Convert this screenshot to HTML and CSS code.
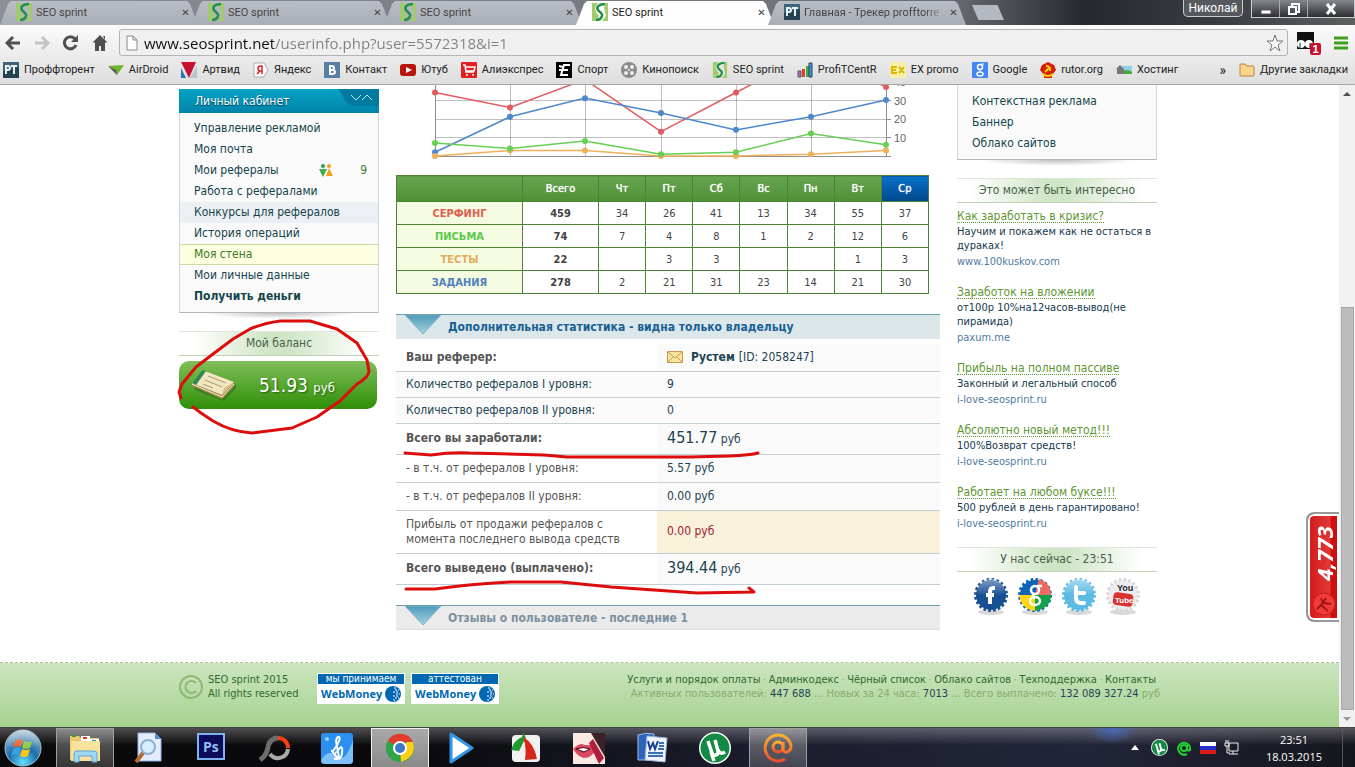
FILE: index.html
```html
<!DOCTYPE html>
<html lang="ru">
<head>
    <meta charset="UTF-8">
    <meta name="viewport" content="width=device-width, initial-scale=1.0">
    <title>SEO sprint</title>
    <link rel="stylesheet" href="styles.css">
</head>
<body>
    <!-- Shared icons -->
    <svg class="defs" aria-hidden="true">
        <defs>
            <linearGradient id="arrow-fill" x1="0" y1="0" x2="0" y2="1">
                <stop offset="0" stop-color="#4f9bb8"/>
                <stop offset="1" stop-color="#a4d3e2"/>
            </linearGradient>
            <linearGradient id="gloss" x1="0" y1="0" x2="0" y2="1">
                <stop offset="0" stop-color="#fff" stop-opacity=".45"/>
                <stop offset="1" stop-color="#fff" stop-opacity="0"/>
            </linearGradient>
            <radialGradient id="orb" cx=".5" cy=".9" r=".9">
                <stop offset="0" stop-color="#5fe0ff"/>
                <stop offset=".45" stop-color="#1c6ea8"/>
                <stop offset="1" stop-color="#9db9cc"/>
            </radialGradient>
            <linearGradient id="mail-fill" x1="0" y1="0" x2="0" y2="1">
                <stop offset="0" stop-color="#ffb22e"/>
                <stop offset="1" stop-color="#ee4f2e"/>
            </linearGradient>
            <symbol id="seo" viewBox="0 0 16 18">
                <path d="M0 0h6L3 5l1 4 3 4-3 5H0z" fill="#a2cc6c"/>
                <path d="M16 0h-3l-1 5 1 4 1 4-4 5h6z" fill="#a2cc6c"/>
                <path d="M13 1C7 1 4 4 6 7s5 3 4 6-3 4-6 4" fill="none" stroke="#1f8f4e" stroke-width="2.500"/>
            </symbol>
            <symbol id="pt" viewBox="0 0 16 16">
                <rect width="16" height="16" fill="#3f6579"/>
                <path d="M0 9l16-4v11H0z" fill="#234252"/>
                <path d="M3 12V4h2q2 0 2 2T5 8H3M8 4h6M11 4v8" fill="none" stroke="#e8f1f5" stroke-width="2"/>
            </symbol>
            <symbol id="down" viewBox="0 0 36 20">
                <path d="M0 0h36L18 19z" fill="url(#arrow-fill)" stroke="#7fb4c8" stroke-width="1"/>
            </symbol>
            <symbol id="gear" viewBox="0 0 36 42">
                <ellipse cx="18" cy="35" rx="13" ry="3" fill="#000" opacity=".15"/>
                <circle cx="18" cy="18" r="15"/>
                <circle cx="18" cy="18" r="15.500" fill="none" stroke="currentColor" stroke-width="3" stroke-dasharray="2.600 2.270"/>
            </symbol>
            <symbol id="utorrent" viewBox="0 0 32 32">
                <circle cx="16" cy="16" r="16" fill="#fff"/>
                <circle cx="16" cy="16" r="14.500" fill="#128a43"/>
                <path d="M9 9l4 12q1 3 4 2 3-1 2-4l-3-11M19 18q2 5 7 2M12 20l3 9" fill="none" stroke="#fff" stroke-width="3.500"/>
            </symbol>
            <symbol id="globe" viewBox="0 0 16 16">
                <circle cx="8" cy="8" r="8" fill="#0068b0"/>
                <path d="M9 2h2M10 4h4M8 6h6M11 8h4M8 10h6M10 12h4M8 14h3" stroke="#fff" stroke-width="1" stroke-dasharray="2 1"/>
            </symbol>
        </defs>
    </svg>

    <header class="browser">
        <div class="tab-strip">
            <div class="tabs">
                <button class="tab"><svg class="favicon"><use href="#seo"/></svg><span>SEO sprint</span><i class="close">✕</i></button>
                <button class="tab"><svg class="favicon"><use href="#seo"/></svg><span>SEO sprint</span><i class="close">✕</i></button>
                <button class="tab"><svg class="favicon"><use href="#seo"/></svg><span>SEO sprint</span><i class="close">✕</i></button>
                <button class="tab tab-active"><svg class="favicon"><use href="#seo"/></svg><span>SEO sprint</span><i class="close">✕</i></button>
                <button class="tab"><svg class="favicon"><use href="#pt"/></svg><span class="fade">Главная - Трекер profftorre</span><i class="close">✕</i></button>
                <button class="new-tab" aria-label="Новая вкладка"></button>
            </div>
            <div class="window-controls">
                <button class="profile">Николай</button>
                <div class="win-btns">
                    <button aria-label="Свернуть"><svg width="12" height="12"><rect x="1" y="7" width="10" height="4" fill="#fff" stroke="#555"/></svg></button>
                    <button aria-label="Восстановить"><svg width="12" height="12"><path d="M4 3V1h7v8H9M1 4h7v7H1z" fill="none" stroke="#fff" stroke-width="2"/></svg></button>
                    <button class="win-close" aria-label="Закрыть"><svg width="12" height="12"><path d="M2 1l8 10M10 1L2 11" stroke="#fff" stroke-width="3"/></svg></button>
                </div>
            </div>
        </div>

        <div class="toolbar">
            <button class="nav-btn" aria-label="Назад"><svg width="16" height="14"><path d="M15 7H3M8 1L2 7l6 6" fill="none" stroke="#505050" stroke-width="3"/></svg></button>
            <button class="nav-btn" aria-label="Вперёд"><svg width="16" height="14"><path d="M1 7h12M8 1l6 6-6 6" fill="none" stroke="#c4c4c4" stroke-width="3"/></svg></button>
            <button class="nav-btn" aria-label="Обновить"><svg width="16" height="16"><path d="M13 10a6 6 0 1 1-1-6" fill="none" stroke="#505050" stroke-width="3"/><path d="M15 0v7H8z" fill="#505050"/></svg></button>
            <button class="nav-btn" aria-label="Домой"><svg width="16" height="16"><path d="M8 0l7 7-1 1-1-1v9H9v-5H7v5H3V7L2 8 1 7zM11 1h2v4z" fill="#505050"/></svg></button>
            <div class="omnibox">
                <svg width="12" height="16"><path d="M1 1h6l4 4v10H1zM7 1v4h4" fill="#fff" stroke="#888"/></svg>
                <input class="url" type="text" aria-label="Адрес" value="www.seosprint.net/userinfo.php?user=5572318&amp;i=1">
                <svg width="18" height="18"><path d="M9 1l2 6h6l-5 4 2 6-5-4-5 4 2-6-5-4h6z" fill="#fff" stroke="#777"/></svg>
            </div>
            <button class="ext" aria-label="Расширение">
                <svg width="24" height="24"><path d="M0 1h17v17H0z" fill="#111"/><circle cx="4" cy="13" r="4" fill="#fff"/><circle cx="12" cy="13" r="4" fill="#fff"/><path d="M3 12v6M13 12v6" stroke="#222"/></svg>
                <span class="ext-count">1</span>
            </button>
            <button class="menu-btn" aria-label="Меню"><svg width="14" height="14"><path d="M0 2h14M0 7h14M0 12h14" stroke="#3f9f1e" stroke-width="3"/></svg></button>
        </div>

        <nav class="bookmarks">
            <a href="#"><svg><use href="#pt"/></svg>Проффторент</a>
            <a href="#"><svg viewBox="0 0 16 16"><path d="M0 4l16-1-7 10-3-6z" fill="#6fb52c"/><path d="M0 4l9 9-1-5z" fill="#555"/></svg>AirDroid</a>
            <a href="#"><svg viewBox="0 0 16 16"><path d="M0 6l5 10H0z" fill="#2c72b8"/><path d="M16 4v12H9z" fill="#b9c3cc"/><path d="M0 0h15L8 16z" fill="#c4122f"/></svg>Артвид</a>
            <a href="#"><svg viewBox="0 0 16 16"><path d="M1 1h10l4 7-4 7H1z" fill="#fff" stroke="#aaa"/><path d="M9 12V4H7q-2 0-2 2.500T7 9h2M7 9l-3 3" fill="none" stroke="#e02020" stroke-width="1.500"/></svg>Яндекс</a>
            <a href="#"><svg viewBox="0 0 16 16"><rect width="16" height="16" fill="#587ea3"/><path d="M6 4v8h2q3 0 3-2T8 8H6h2q2 0 2-2T8 4z" fill="none" stroke="#fff" stroke-width="2"/></svg>Контакт</a>
            <a href="#"><svg viewBox="0 0 16 16"><rect y="2" width="16" height="12" rx="3" fill="#b8150f"/><path d="M6 5l6 3-6 3z" fill="#fff"/></svg>Ютуб</a>
            <a href="#"><svg viewBox="0 0 16 16"><rect width="16" height="16" rx="1" fill="#e02121"/><path d="M2 3h2l1 7h8M5 5h9l-1 4H5" fill="none" stroke="#fff" stroke-width="1.500"/><circle cx="6" cy="13" r="1" fill="#fff"/><circle cx="12" cy="13" r="1" fill="#fff"/></svg>Алиэкспрес</a>
            <a href="#"><svg viewBox="0 0 16 16"><rect width="16" height="16" fill="#000"/><path d="M14 3H8L5 13h7M3 8h9M3 4l4 1" fill="none" stroke="#fff" stroke-width="2"/></svg>Спорт</a>
            <a href="#"><svg viewBox="0 0 16 16"><circle cx="8" cy="8" r="8" fill="#8b8b8b"/><g fill="#eee"><circle cx="5" cy="5" r="2"/><circle cx="11" cy="5" r="2"/><circle cx="5" cy="11" r="2"/><circle cx="11" cy="11" r="2"/><circle cx="8" cy="8" r="1"/></g></svg>Кинопоиск</a>
            <a href="#"><svg><use href="#seo"/></svg>SEO sprint</a>
            <a href="#"><svg viewBox="0 0 16 16"><path d="M1 9h3v6H1z" fill="#b06fc0" stroke="#555"/><path d="M5 7h3v8H5z" fill="#e04030"/><path d="M9 4h3v11H9z" fill="#3faf3f"/><path d="M12 1h3v14h-3z" fill="#4a90d9" stroke="#246"/></svg>ProfiTCentR</a>
            <a href="#"><svg viewBox="0 0 16 16"><rect width="16" height="16" fill="#f6efa8"/><path d="M7 5H2v6h5M2 8h4M9 5l5 6M14 5l-5 6" fill="none" stroke="#d8b800" stroke-width="2"/></svg>EX promo</a>
            <a href="#"><svg viewBox="0 0 16 16"><rect width="16" height="16" rx="1" fill="#4285f4"/><circle cx="8" cy="5" r="2.500" fill="none" stroke="#fff" stroke-width="1.500"/><path d="M9 2h3M8 8q-1 1 1 2" stroke="#fff" fill="none"/><ellipse cx="8" cy="12" rx="3" ry="2" fill="none" stroke="#fff" stroke-width="1.500"/></svg>Google</a>
            <a href="#"><svg viewBox="0 0 16 16"><path d="M8 0l6 3 2 5-4 5v3H4v-3L0 8l2-5z" fill="#d81e05"/><path d="M3 12q5 4 10 0M6 4q5 0 4 5M5 10l5-5" fill="none" stroke="#ffd200" stroke-width="2"/></svg>rutor.org</a>
            <a href="#"><svg viewBox="0 0 16 16"><path d="M5 4h11v8H5z" fill="#8fd0ec"/><path d="M5 10q6-4 11 0v2H5z" fill="#4aa83a"/><path d="M0 7l4-4 4 4v5H1V7z" fill="#777"/></svg>Хостинг</a>
            <button class="more">»</button>
            <a class="other" href="#"><svg viewBox="0 0 16 16"><path d="M1 3q0-1 1-1h4l2 2h6q1 0 1 1v8q0 1-1 1H2q-1 0-1-1z" fill="#fbd58e" stroke="#b98637"/></svg>Другие закладки</a>
        </nav>
    </header>

    <div class="viewport">
        <div class="page">
            <main class="wrap">
                <aside class="col">
                    <section class="menu-box">
                        <h2 class="menu-title">Личный кабинет<svg width="42" height="17"><path d="M0 0h42v17H20Q10 17 6 8T0 0z" fill="#007a9e"/><path d="M14 6l5 5 5-5M25 11l5-5 5 5" fill="none" stroke="#b8edf7" stroke-width="1"/></svg></h2>
                        <ul class="menu">
                            <li><a href="#">Управление рекламой</a></li>
                            <li><a href="#">Моя почта</a></li>
                            <li><a href="#">Мои рефералы</a><span class="refs"><svg width="14" height="14"><circle cx="4" cy="2" r="2" fill="#2f9a4e"/><path d="M0 5h8l-4 8z" fill="#3fae50"/><circle cx="10" cy="2" r="2" fill="#f0a020"/><path d="M10 4l4 8H7z" fill="#f5a01e"/></svg>9</span></li>
                            <li><a href="#">Работа с рефералами</a></li>
                            <li class="hover"><a href="#">Конкурсы для рефералов</a></li>
                            <li><a href="#">История операций</a></li>
                            <li class="current"><a href="#">Моя стена</a></li>
                            <li><a href="#">Мои личные данные</a></li>
                            <li><a class="strong" href="#">Получить деньги</a></li>
                        </ul>
                    </section>
                    <h3 class="side-title">Мой баланс</h3>
                    <a class="balance" href="#">
                        <svg width="48" height="32" viewBox="0 0 48 32"><path d="M4 17l29 13 13-15v4L34 32 5 21z" fill="#2b5d14" opacity=".5"/><path d="M2 14l30 12 12-13v4L32 30 2 17z" fill="#a8844e"/><path d="M2 14L12 1l32 12-12 13z" fill="#f3e6c0"/><path d="M2 14L12 1l4 1L6 16z" fill="#2b8a4c"/><path d="M18 7l18 7M15 11l17 7M13 15l10 4" stroke="#a99a6a"/><path d="M32 26l2-7 10-6z" fill="#d9bf86"/><path d="M2 15l30 13 12-13" fill="none" stroke="#f8f0d8"/></svg>
                        <span class="sum">51.93 <small>руб</small></span>
                    </a>
                </aside>

                <section class="content">
                    <svg class="chart" viewBox="0 0 544 78" width="544" height="78">
                        <path d="M39 15.500h456M39 34.500h456M39 52.500h456M114.500 0v71M189.500 0v71M265.500 0v71M340.500 0v71M415.500 0v71" stroke="#000" stroke-opacity=".25"/>
                        <path d="M39.500 0v71M490.500 0v71M39 71.500h456M490 15.500h5M490 34.500h5M490 52.500h5" stroke="#8d8d8d"/>
                        <g class="chart-labels"><text x="498" y="1">40</text><text x="498" y="20">30</text><text x="498" y="38">20</text><text x="498" y="57">10</text></g>
                        <g id="series"></g>
                    </svg>

                    <table class="week">
                        <colgroup><col class="w-name"><col class="w-total"><col span="7"></colgroup>
                        <thead>
                            <tr><th></th><th>Всего</th><th>Чт</th><th>Пт</th><th>Сб</th><th>Вс</th><th>Пн</th><th>Вт</th><th class="today">Ср</th></tr>
                        </thead>
                        <tbody>
                            <tr><th class="red">СЕРФИНГ</th><td>459</td><td>34</td><td>26</td><td>41</td><td>13</td><td>34</td><td>55</td><td>37</td></tr>
                            <tr><th class="green">ПИСЬМА</th><td>74</td><td>7</td><td>4</td><td>8</td><td>1</td><td>2</td><td>12</td><td>6</td></tr>
                            <tr><th class="orange">ТЕСТЫ</th><td>22</td><td></td><td>3</td><td>3</td><td></td><td></td><td>1</td><td>3</td></tr>
                            <tr><th class="blue">ЗАДАНИЯ</th><td>278</td><td>2</td><td>21</td><td>31</td><td>23</td><td>14</td><td>21</td><td>30</td></tr>
                        </tbody>
                    </table>

                    <h2 class="bar"><svg width="36" height="20"><use href="#down"/></svg>Дополнительная статистика - видна только владельцу</h2>
                    <table class="stats">
                        <tr class="main first"><th>Ваш реферер:</th><td><span class="referer"><svg width="16" height="12"><path d="M.5.5h15v11H.5z" fill="#f9e3a2" stroke="#c79a45"/><path d="M1 1l7 6 7-6M1 11l5-5M15 11l-5-5" fill="none" stroke="#c79a45"/></svg><b>Рустем</b> [ID: 2058247]</span></td></tr>
                        <tr class="shade"><th>Количество рефералов I уровня:</th><td>9</td></tr>
                        <tr class="shade"><th>Количество рефералов II уровня:</th><td>0</td></tr>
                        <tr class="main total"><th>Всего вы заработали:</th><td><span class="big">451.77</span> руб</td></tr>
                        <tr class="sub"><th>- в т.ч. от рефералов I уровня:</th><td>5.57 руб</td></tr>
                        <tr class="sub"><th>- в т.ч. от рефералов II уровня:</th><td>0.00 руб</td></tr>
                        <tr class="profit"><th>Прибыль от продажи рефералов с момента последнего вывода средств</th><td>0.00 руб</td></tr>
                        <tr class="main total"><th>Всего выведено (выплачено):</th><td><span class="big">394.44</span> руб</td></tr>
                    </table>
                    <h2 class="bar bar-gray"><svg width="36" height="20"><use href="#down"/></svg>Отзывы о пользователе - последние 1</h2>
                </section>

                <aside class="col">
                    <section class="menu-box menu-cut">
                        <ul class="menu">
                            <li><a href="#">Ссылка в каталоге</a></li>
                            <li><a href="#">Контекстная реклама</a></li>
                            <li><a href="#">Баннер</a></li>
                            <li><a href="#">Облако сайтов</a></li>
                        </ul>
                    </section>
                    <h3 class="side-title">Это может быть интересно</h3>
                    <div class="ads">
                        <div class="ad"><a href="#">Как заработать в кризис?</a><p>Научим и покажем как не остаться в дураках!</p><span>www.100kuskov.com</span></div>
                        <div class="ad"><a href="#">Заработок на вложении</a><p>от100р 10%на12часов-вывод(не пирамида)</p><span>paxum.me</span></div>
                        <div class="ad"><a href="#">Прибыль на полном пассиве</a><p>Законный и легальный способ</p><span>i-love-seosprint.ru</span></div>
                        <div class="ad"><a href="#">Абсолютно новый метод!!!</a><p>100%Возврат средств!</p><span>i-love-seosprint.ru</span></div>
                        <div class="ad"><a href="#">Работает на любом буксе!!!</a><p>500 рублей в день гарантировано!</p><span>i-love-seosprint.ru</span></div>
                    </div>
                    <h3 class="side-title clock-title">У нас сейчас - 23:51</h3>
                    <div class="social">
                        <a href="#" aria-label="Facebook"><svg viewBox="0 0 36 42"><use href="#gear" fill="#174f93" color="#174f93"/><path d="M22 11h-2q-3 0-3 4v12M13 18h8" fill="none" stroke="#fff" stroke-width="4"/><path d="M4 16a14 14 0 0 1 28 0q-14 6-28 0" fill="url(#gloss)"/></svg></a>
                        <a href="#" aria-label="Google"><svg viewBox="0 0 36 42"><use href="#gear" fill="#0d64b4" color="#0d64b4"/><path d="M18 18L22 2q12 4 12 16z" fill="#ee6b63"/><path d="M18 18h16q0 13-16 16z" fill="#13a24b"/><path d="M18 18v16Q4 32 2 18z" fill="#ffd516"/><g fill="none" stroke="#fff" stroke-width="2.500"><circle cx="18" cy="13" r="4"/><path d="M20 9h5M17 17q-3 3 1 4"/><ellipse cx="18" cy="24" rx="5" ry="4"/></g></svg></a>
                        <a href="#" aria-label="Twitter"><svg viewBox="0 0 36 42"><use href="#gear" fill="#5bbbe2" color="#5bbbe2"/><path d="M15 10v11q0 5 5 5h3M15 16h8" fill="none" stroke="#fff" stroke-width="4" stroke-linecap="round"/><path d="M4 16a14 14 0 0 1 28 0q-14 6-28 0" fill="url(#gloss)"/></svg></a>
                        <a href="#" aria-label="YouTube"><svg viewBox="0 0 36 42"><use href="#gear" fill="#ececf0" color="#d6d6dc"/><rect x="8" y="16" width="20" height="13" rx="4" fill="#d9322f" transform="rotate(8 18 23)"/><text class="yt-you" x="12" y="14">You</text><text class="yt-tube" x="10" y="26">Tube</text></svg></a>
                    </div>
                </aside>

                <!-- Red marker strokes -->
                <svg class="marks" viewBox="179 85 981 577" width="981" height="577" aria-hidden="true">
                    <path d="M181 398l-2-6 3-8 14-17 17-13 20-15 17-10q14-6 30-8h30l27 8 20 14 10 17 2 11q0 6-12 13l-17 17-23 16-25 11-40 5q-20-1-39-12l-12-8-8-6"/>
                    <path d="M405 453l26 2q20-3 39-2l74 2 23 2h123l39-1q22-1 29-3"/>
                    <path d="M406 589h29q36-5 76-7h50l50 5 86 6 57-1-5-4"/>
                </svg>
            </main>

            <a class="counter" href="#"><svg width="24" height="24" viewBox="0 0 24 24"><circle cx="12" cy="12" r="11" fill="#f13b3b" stroke="#c91c1c"/><path d="M5 17l6-6 3-5M11 11l8 1M9 13l7 6M11 11l-2-5" fill="none" stroke="#a31515" stroke-width="2"/></svg><b>4,773</b></a>

            <footer class="footer">
                <div class="footer-in">
                    <div class="copy"><svg width="24" height="24"><circle cx="12" cy="12" r="11" fill="none" stroke="#8cba72" stroke-width="2"/><path d="M17 8a6 6 0 1 0 0 8" fill="none" stroke="#8cba72" stroke-width="2"/></svg><p>SEO sprint 2015<br>All rights reserved</p></div>
                    <a class="wm" href="#"><span>мы принимаем</span><b>WebMoney<svg width="16" height="16"><use href="#globe"/></svg></b></a>
                    <a class="wm" href="#"><span>аттестован</span><b>WebMoney<svg width="16" height="16"><use href="#globe"/></svg></b></a>
                    <div class="footer-right">
                        <nav class="footer-links"><a href="#">Услуги и порядок оплаты</a><i>·</i><a href="#">Админкодекс</a><i>·</i><a href="#">Чёрный список</a><i>·</i><a href="#">Облако сайтов</a><i>·</i><a href="#">Техподдержка</a><i>·</i><a href="#">Контакты</a></nav>
                        <p>Активных пользователей: <em>447 688</em> ... Новых за 24 часа: <em>7013</em> ... Всего выплачено: <em>132 089 327.24</em> руб</p>
                    </div>
                </div>
            </footer>
        </div>
        <div class="scrollbar" aria-hidden="true"><i class="up"></i><div class="thumb"></div><i class="dn"></i></div>
    </div>

    <div class="taskbar">
        <button class="start" aria-label="Пуск"><svg width="38" height="38" viewBox="0 0 38 38"><circle cx="19" cy="19" r="18" fill="url(#orb)" stroke="#9fc4d8"/><path d="M11 12q4-3 8-1l-2 7q-4-2-8 1z" fill="#ee5a24"/><path d="M20 12q4 2 8 0l-2 7q-4 2-8 0z" fill="#8cc63f"/><path d="M9 20q4-3 8-1l-2 7q-4-2-8 1z" fill="#39a0e8"/><path d="M18 20q4 2 8 0l-2 7q-4 2-8 0z" fill="#fcc419"/><path d="M3 17a16 16 0 0 1 32 0q-16 5-32 0" fill="url(#gloss)"/></svg></button>
        <button class="task open" aria-label="Проводник"><svg viewBox="0 0 32 32"><path d="M1 4h9l2 2h18v22H1z" fill="#e9c76c"/><path d="M12 4h9v5h-9zM21 7h9v4h-9z" fill="#fff"/><path d="M3 3h4v2H3z" fill="#2aa52a"/><path d="M14 5h4v2h-4z" fill="#d33"/><path d="M23 8h4v2h-4z" fill="#28c"/><path d="M2 9h29v20H2z" fill="#f8e39c"/><path d="M5 30v-8q0-3 3-3h17q3 0 3 3v8h-5v-6H10v6z" fill="#9fd6f2" stroke="#5aa6d0"/></svg></button>
        <button class="task" aria-label="Поиск"><svg viewBox="0 0 32 32"><path d="M6 1h17l6 6v22H6z" fill="#e4edfb" stroke="#8fb2e4"/><path d="M23 1v6h6z" fill="#5a86cc"/><circle cx="16" cy="15" r="7" fill="#d5efff" stroke="#8db0cc" stroke-width="2"/><path d="M11 21l-7 9" stroke="#b56a34" stroke-width="4"/></svg></button>
        <button class="task" aria-label="Photoshop"><svg viewBox="0 0 32 32"><rect x="3" y="2" width="26" height="25" fill="#0c0c5a" stroke="#7fb4ee" stroke-width="2"/><text class="ps" x="8" y="20">Ps</text></svg></button>
        <button class="task" aria-label="Диск"><svg viewBox="0 0 32 32"><path d="M20 6a10 10 0 0 0-10 9q-1 8-8 13" fill="none" stroke="#6d6d6d" stroke-width="5"/><path d="M20 6a10 10 0 0 1 10 10" fill="none" stroke="#ff3d14" stroke-width="4"/><path d="M30 17a10 10 0 0 1-18 5" fill="none" stroke="#aaa" stroke-width="4"/></svg></button>
        <button class="task" aria-label="Музыка"><svg viewBox="0 0 32 32"><rect y="1" width="32" height="31" rx="3" fill="#2a8ff0"/><circle cx="6" cy="7" r="2" fill="#9fd2ff"/><path d="M0 28q8-12 16-4t16-16v20q0 4-4 4H4q-4 0-4-4z" fill="#7cc0fa"/><path d="M13 26q3 3 5-1L15 9q1-5 3-4t-2 8-5 6 4 5 6-3-3-4-3 3" fill="none" stroke="#fff" stroke-width="2"/></svg></button>
        <button class="task open bright" aria-label="Chrome"><svg viewBox="0 0 32 32"><circle cx="16" cy="16" r="14" fill="#2fa44a"/><path d="M16 16L4 9a14 14 0 0 1 25 1H16z" fill="#e23c2f"/><path d="M16 16l7-6h6q4 15-12 20z" fill="#fcd016"/><circle cx="16" cy="16" r="7" fill="#fff"/><circle cx="16" cy="16" r="5" fill="#3c79c8"/></svg></button>
        <button class="task" aria-label="Плеер"><svg viewBox="0 0 32 32"><path d="M4 2l21 14L4 30z" fill="#fff" stroke="#2f94ea" stroke-width="3" stroke-linejoin="round"/></svg></button>
        <button class="task" aria-label="Capture"><svg viewBox="0 0 32 32"><rect x="2" y="3" width="28" height="27" rx="4" fill="#f1f1f1"/><path d="M13 0l3 6-2 3-5 10-8-1Q4 8 12 5z" fill="#1f9a2e"/><path d="M13 5q11 6 14 22l-12 1q2-12-2-23z" fill="#d9261c"/></svg></button>
        <button class="task" aria-label="Макияж"><svg viewBox="0 0 32 32"><rect width="32" height="32" y="1" fill="#fbe9e4"/><path d="M18 1h14v24z" fill="#3a2226"/><path d="M0 17q5-5 9-5l3 1 7 0 4 4q-4 9-12 9-6-1-11-9z" fill="#d84a62"/><path d="M3 17q7-3 14 0l-6 3z" fill="#fff" stroke="#501"/><path d="M16 11l4-4 11 19-5 6z" fill="#b01f3a"/></svg></button>
        <button class="task" aria-label="Word"><svg viewBox="0 0 32 32"><path d="M2 3q8-3 16-1v26H2z" fill="#2f63b8" stroke="#9fc0ee"/><path d="M11 4l20 2-2 24-20-2z" fill="#eef5ff" stroke="#9ab6de"/><path d="M12 9l2 8 3-6 2 6 3-8" fill="none" stroke="#1d3f8f" stroke-width="2"/><path d="M23 11h5M23 14h5M22 17h6M12 21h15M12 24h15" stroke="#3a6dc0" stroke-width="2"/></svg></button>
        <button class="task" aria-label="uTorrent"><svg><use href="#utorrent"/></svg></button>
        <button class="task open" aria-label="Mail.Ru"><svg viewBox="0 0 32 32"><g fill="none" stroke="url(#mail-fill)" stroke-width="3"><circle cx="16" cy="15" r="5"/><path d="M21 10v7q1 4 4 3 4-1 4-6a13 13 0 1 0-6 13"/></g></svg></button>

        <div class="tray">
            <svg width="8" height="5"><path d="M0 5l4-5 4 5z" fill="#fff"/></svg>
            <svg width="17" height="17"><use href="#utorrent"/></svg>
            <svg width="16" height="16"><g fill="none" stroke="#1fd32a" stroke-width="2"><circle cx="8" cy="8" r="3"/><path d="M11 5v4q1 2 3 1a6 6 0 1 0-3 4"/></g></svg>
            <svg width="16" height="12"><path d="M0 0h16v4H0z" fill="#fff"/><path d="M0 4h16v4H0z" fill="#2030c8"/><path d="M0 8h16v4H0z" fill="#e01818"/></svg>
            <svg width="16" height="16"><path d="M5 3h9v8H5zM9 11v3M5 14h9M2 0v3M4 0v3M1 3h4v3H1zM3 6v7h3" fill="none" stroke="#eee"/></svg>
            <time>23:51<br>18.03.2015</time>
            <span class="desktop"></span>
        </div>
    </div>

    <script>
        const series = [
            { color: "#e35b62", data: [34, 26, 41, 13, 34, 55, 37] },
            { color: "#4d88cc", data: [2, 21, 31, 23, 14, 21, 30] },
            { color: "#f0b05a", data: [0, 3, 3, 0, 0, 1, 3] },
            { color: "#66cf54", data: [7, 4, 8, 1, 2, 12, 6] }
        ];
        const days = [39, 114, 189, 265, 340, 415, 490];
        const chart = document.getElementById("series");

        chart.innerHTML = series.map(s => {
            const points = s.data.map((v, i) => [days[i], 71 - v * 56 / 30]);
            const dots = points.map(p => `<circle cx="${p[0]}" cy="${p[1]}" r="3" fill="${s.color}"/>`).join("");
            return `<polyline points="${points.join(" ")}" fill="none" stroke="${s.color}" stroke-width="1.5"/>${dots}`;
        }).join("");
    </script>
</body>
</html>
```
FILE: styles.css
```css
* {
    margin: 0;
    padding: 0;
    box-sizing: border-box;
}

body {
    display: flex;
    flex-direction: column;
    height: 100vh;
    overflow: hidden;
    font-family: "DejaVu Sans Condensed", "Noto Sans", sans-serif;
    font-size: 12px;
    color: #1d4454;
    background: #fff;
}

button {
    border: none;
    background: none;
    font: inherit;
    color: inherit;
}

a {
    color: inherit;
    text-decoration: none;
}

ul {
    list-style: none;
}

svg {
    flex: none;
    display: block;
}

.defs {
    position: absolute;
    width: 0;
    height: 0;
}

/* Browser window */
.browser {
    flex: none;
    font-family: Roboto, "Open Sans", sans-serif;
    font-size: 11px;
    color: #222;
    border-bottom: 1px solid #a6a6a6;
    background: linear-gradient(#fbfbfb 25px, #dedede);
}

.tab-strip {
    display: flex;
    justify-content: space-between;
    height: 25px;
    background: linear-gradient(to right, #8d8f96, #6b6d74 70%, #26282d 80%, #3a3d42 90%, #5c605f);
}

.tabs {
    display: flex;
    padding-top: 1px;
}

.tab {
    display: flex;
    align-items: center;
    gap: 4px;
    width: 198px;
    height: 24px;
    margin-right: -6px;
    padding: 0 8px 2px 16px;
    color: #444;
    background: linear-gradient(#b9bdc6, #a9adb6);
    clip-path: polygon(0 100%, 8px 3px, 11px 0, calc(100% - 11px) 0, calc(100% - 8px) 3px, 100% 100%);
}

.tab span {
    flex: 1;
    text-align: left;
    white-space: nowrap;
    overflow: hidden;
}

.tab .fade {
    mask-image: linear-gradient(to right, #000 85%, transparent);
}

.tab-active {
    color: #222;
    background: #fdfdfd;
}

.favicon {
    width: 16px;
    height: 18px;
}

.close {
    width: 9px;
    font: bold 10px "DejaVu Sans", sans-serif;
    color: #444;
}

.new-tab {
    width: 32px;
    height: 15px;
    margin: 4px 0 0 12px;
    background: #b4b8c1;
    clip-path: polygon(0 0, 80% 0, 100% 100%, 20% 100%);
}

.window-controls {
    display: flex;
    align-items: flex-start;
    gap: 8px;
}

.profile {
    width: 60px;
    height: 17px;
    line-height: 15px;
    font-size: 12px;
    color: #fff;
    border: 1px solid #ccc;
    border-top: none;
    border-radius: 0 0 5px 5px;
    background: #55595e;
}

.win-btns {
    display: flex;
    height: 18px;
    border: 1px solid #ccc;
    border-top: none;
    background: linear-gradient(#85888a, #2c2e31);
}

.win-btns button {
    display: flex;
    justify-content: center;
    align-items: center;
    width: 28px;
    border-right: 1px solid #aaa;
}

.win-btns .win-close {
    width: 46px;
    border-right: none;
}

.toolbar {
    display: flex;
    align-items: center;
    height: 33px;
    padding: 2px 7px 0 5px;
}

.nav-btn {
    width: 16px;
    margin-right: 13px;
}

.omnibox {
    flex: 1;
    display: flex;
    align-items: center;
    gap: 6px;
    height: 27px;
    margin-left: -2px;
    margin-right: 9px;
    padding: 0 3px 0 6px;
    border: 1px solid #b4b4b4;
    border-radius: 3px;
    background: #f0f0f0;
}

.url {
    flex: 1;
    border: none;
    outline: none;
    font-family: "Open Sans", "Noto Sans", sans-serif;
    font-size: 15px;
    color: transparent;
    background: linear-gradient(to right, #111 130px, #808080 130px);
    -webkit-background-clip: text;
    background-clip: text;
}

.ext {
    position: relative;
    margin-right: 13px;
}

.ext-count {
    position: absolute;
    right: 0;
    bottom: 0;
    width: 11px;
    border-radius: 2px;
    font: bold 11px/12px "Liberation Sans", sans-serif;
    color: #fff;
    background: #c4122f;
}

.bookmarks {
    display: flex;
    align-items: center;
    gap: 13px;
    height: 26px;
    padding: 0 7px 3px 3px;
    white-space: nowrap;
}

.bookmarks a {
    display: flex;
    align-items: center;
    gap: 5px;
}

.bookmarks svg {
    width: 16px;
    height: 16px;
}

.more {
    margin-left: auto;
    font-size: 14px;
}

/* Page */
.viewport {
    flex: 1;
    display: flex;
    min-height: 0;
}

.page {
    position: relative;
    flex: 1;
    display: flex;
    flex-direction: column;
    overflow: hidden;
}

.wrap {
    position: relative;
    flex: 1;
    display: grid;
    grid-template-columns: 200px 1fr 200px;
    gap: 17px;
    width: 981px;
    min-height: 0;
    margin: 0 auto;
    padding-right: 3px;
}

.marks {
    position: absolute;
    top: 0;
    left: 0;
    overflow: visible;
    fill: none;
    stroke: #de0d0d;
    stroke-width: 3;
    stroke-linecap: round;
    stroke-linejoin: round;
    pointer-events: none;
}

.menu-box {
    position: relative;
    margin-top: 4px;
    margin-bottom: 18px;
}

.menu-box::after {
    content: "";
    display: block;
    position: absolute;
    left: 20px;
    right: 20px;
    top: 100%;
    height: 6px;
    background: radial-gradient(ellipse at top, rgba(0, 0, 0, 0.25), transparent 70%);
}

.menu-title {
    display: flex;
    justify-content: space-between;
    height: 24px;
    padding-left: 16px;
    line-height: 24px;
    font-size: 12px;
    font-weight: normal;
    color: #fff;
    text-shadow: 0 1px 1px #035;
    background: linear-gradient(#06a3c4, #0083a8);
}

.menu {
    padding: 5px 0;
    border: 1px solid #d4d6d8;
    border-top: none;
    border-bottom-color: #b4b6b8;
    background: #fafafa;
}

.menu li {
    display: flex;
    justify-content: space-between;
    height: 21px;
    padding: 0 11px 0 14px;
    line-height: 21px;
    color: #14444c;
}

.menu .hover {
    background: #eceff4;
}

.menu .current {
    line-height: 19px;
    color: #3a7a28;
    border: solid #ccd9a0;
    border-width: 1px 0;
    background: #fdffe0;
}

.menu .strong {
    font-weight: bold;
}

.refs {
    display: flex;
    align-items: center;
    gap: 27px;
    color: #3a7a28;
}

.menu-cut {
    margin-top: -20px;
}

.side-title {
    height: 25px;
    line-height: 23px;
    font-size: 12px;
    font-weight: normal;
    text-align: center;
    color: #47614a;
    border-top: 1px solid #dde5d8;
    border-bottom: 1px solid #c3d0b8;
    background: linear-gradient(to right, #fff 7%, #cfe5c6 45%, #cfe5c6 55%, #fff 93%);
}

.balance {
    display: flex;
    align-items: center;
    gap: 21px;
    width: 198px;
    height: 48px;
    margin-top: 5px;
    padding-left: 11px;
    border-radius: 10px;
    color: #fff;
    text-shadow: 1px 1px 2px #2b5d14;
    background: linear-gradient(#7fbf58, #2f8f08);
}

.sum {
    font-size: 19px;
}

.sum small {
    font-size: 13px;
}

.chart-labels {
    font: 11px "Liberation Sans", sans-serif;
    fill: #666;
}

.week {
    width: 533px;
    margin-top: 12px;
    table-layout: fixed;
    border-collapse: collapse;
    font-size: 11px;
    text-align: center;
    color: #444;
}

.w-name {
    width: 126px;
}

.w-total {
    width: 76px;
}

.week th,
.week td {
    height: 23px;
    border: 1px solid #4a8434;
}

.week thead th {
    height: 26px;
    font-weight: normal;
    color: #fff;
    text-shadow: 0 0 1px #fff;
    background: linear-gradient(#67a551, #4f9034);
}

.week thead .today {
    background: linear-gradient(#0a72c8, #00478a);
}

.week tbody th {
    background: #f4fbe0;
}

.week td:nth-child(2) {
    font-weight: bold;
}

.red { color: #e06050; }
.green { color: #5cc94c; }
.orange { color: #e3ab5c; }
.blue { color: #4f80bd; }

.bar {
    display: flex;
    gap: 7px;
    height: 25px;
    margin-top: 20px;
    padding-left: 9px;
    line-height: 24px;
    font-size: 12px;
    color: #176095;
    border-top: 1px solid #6fa0ae;
    background: #dce7ea;
}

.bar-gray {
    color: #7d919e;
    background: #ebebeb;
    border-bottom: 1px solid #ddd;
}

.stats {
    width: 100%;
    margin-top: 5px;
    border-collapse: collapse;
    table-layout: fixed;
}

.stats th,
.stats td {
    height: 26px;
    padding: 0 10px;
    text-align: left;
    font-weight: normal;
    line-height: 15px;
    border-bottom: 1px solid #c3cfd5;
}

.stats th {
    width: 261px;
}

.stats td,
.stats .shade th {
    background: #fafafa;
}

.stats .first th,
.stats .first td {
    height: 27px;
}

.stats .main th {
    font-weight: bold;
    color: #555;
}

.stats .total th,
.stats .total td {
    height: 31px;
}

.stats .sub th,
.stats .sub td {
    height: 28px;
}

.stats .sub th,
.stats .profit th {
    color: #555;
}

.stats .profit th,
.stats .profit td {
    height: 43px;
}

.stats .profit td {
    color: #9c1b33;
    background: #faf1da;
}

.referer {
    display: flex;
    align-items: center;
    gap: 4px;
}

.referer b {
    margin-left: 4px;
}

.big {
    font-size: 16px;
}

.ads {
    padding-top: 4px;
}

.ad {
    margin-bottom: 12px;
    font-size: 11px;
}

.ad a {
    display: block;
    width: fit-content;
    height: 16px;
    margin-bottom: 2px;
    line-height: 18px;
    font-size: 12px;
    color: #5e9632;
    border-bottom: 1px dotted #5e9632;
}

.ad p {
    line-height: 14px;
    color: #14384e;
}

.ad span {
    display: block;
    line-height: 18px;
    color: #4e7a9f;
}

.clock-title {
    margin-top: 14px;
}

.social {
    display: flex;
    gap: 8px;
    margin: 5px 0 0 16px;
}

.social svg {
    width: 36px;
    height: 42px;
}

.yt-you {
    font: bold 9px "Liberation Sans", sans-serif;
    fill: #222;
}

.yt-tube {
    font: bold 8px "Liberation Sans", sans-serif;
    fill: #fff;
}

.counter {
    position: absolute;
    right: 0;
    bottom: 105px;
    display: flex;
    flex-direction: column-reverse;
    align-items: center;
    justify-content: space-between;
    width: 33px;
    height: 110px;
    padding: 12px 0 4px;
    color: #fff;
    border: 2px solid #999;
    border-right: none;
    border-radius: 8px 0 0 8px;
    box-shadow: inset 0 0 0 2px #fff;
    background: linear-gradient(to right, #d21919, #e23838 70%, #d00e0e 75%);
}

.counter b {
    writing-mode: vertical-rl;
    transform: rotate(180deg);
    font: italic bold 22px "Open Sans", sans-serif;
}

.footer {
    flex: none;
    height: 65px;
    border-top: 1px dashed #a3c78c;
    font-size: 11px;
    background: linear-gradient(#cde5c1, #a5d28f) padding-box;
}

.footer-in {
    display: flex;
    align-items: flex-start;
    width: 981px;
    margin: 0 auto;
    padding-top: 10px;
    line-height: 14px;
}

.copy {
    display: flex;
    align-items: center;
    gap: 5px;
    width: 138px;
    color: #2e6a2c;
}

.wm {
    width: 88px;
    height: 31px;
    margin-right: 6px;
    border: 1px solid #fff;
    background: #fff;
    color: #0068b0;
}

.wm span {
    display: block;
    height: 10px;
    line-height: 10px;
    font-size: 10px;
    text-align: center;
    color: #fff;
    background: #0068b0;
}

.wm b {
    display: flex;
    align-items: center;
    justify-content: space-between;
    height: 19px;
    padding: 0 3px;
    font: bold 11px "Open Sans", sans-serif;
}

.footer-right {
    flex: 1;
    text-align: right;
    color: #83b06a;
}

.footer-links {
    padding-right: 4px;
    color: #2e6a2c;
}

.footer-links i {
    padding: 0 3px 0 2px;
    color: #83b06a;
}

.footer-right em {
    font-style: normal;
    color: #1d4454;
}

.scrollbar {
    flex: none;
    display: flex;
    flex-direction: column;
    align-items: center;
    justify-content: space-between;
    width: 16px;
    padding: 7px 0 6px;
    background: #f1f1f1;
}

.scrollbar i {
    border: 4px solid transparent;
}

.scrollbar .up {
    border-bottom-color: #505050;
    border-top: none;
}

.scrollbar .dn {
    border-top-color: #999;
    border-bottom: none;
}

.thumb {
    width: 13px;
    height: 64%;
    margin-top: auto;
    margin-bottom: 7px;
    border: 1px solid #a8a8a8;
    background: #bcbcbc;
}

/* Taskbar */
.taskbar {
    flex: none;
    display: flex;
    gap: 5px;
    height: 40px;
    border-top: 1px solid #444;
    background: linear-gradient(rgba(255, 255, 255, 0.28), transparent 45%), linear-gradient(to right, #0a0a0b, #0a0a0d 30%, #1b1c2b 55%, #22253a 80%, #15161c);
}

.start {
    width: 46px;
    padding-left: 4px;
    margin-right: 5px;
}

.task {
    display: flex;
    justify-content: center;
    align-items: center;
    width: 58px;
}

.task svg {
    width: 32px;
    height: 32px;
}

.open {
    border: 1px solid #a0a0a0;
    border-bottom: none;
    background: linear-gradient(rgba(255, 255, 255, 0.35), rgba(255, 255, 255, 0.18));
}

.bright {
    border-color: #eee;
    background: linear-gradient(#a9a9a9, #8a8a8a);
}

.ps {
    font: bold 14px "Open Sans", sans-serif;
    fill: #8fc0f5;
}

.tray {
    display: flex;
    align-items: center;
    gap: 8px;
    margin-left: auto;
    padding-left: 40px;
    font-family: "Open Sans", "Noto Sans", sans-serif;
    font-size: 11px;
    line-height: 17px;
    color: #fff;
    background: radial-gradient(ellipse 26px 16px at 22px 0, #4468b8, transparent);
}

.tray svg:first-child {
    margin-right: 4px;
}

.tray time {
    margin-left: 18px;
    text-align: center;
}

.desktop {
    align-self: stretch;
    width: 13px;
    margin-left: 12px;
    border-left: 1px solid #555;
}
```
